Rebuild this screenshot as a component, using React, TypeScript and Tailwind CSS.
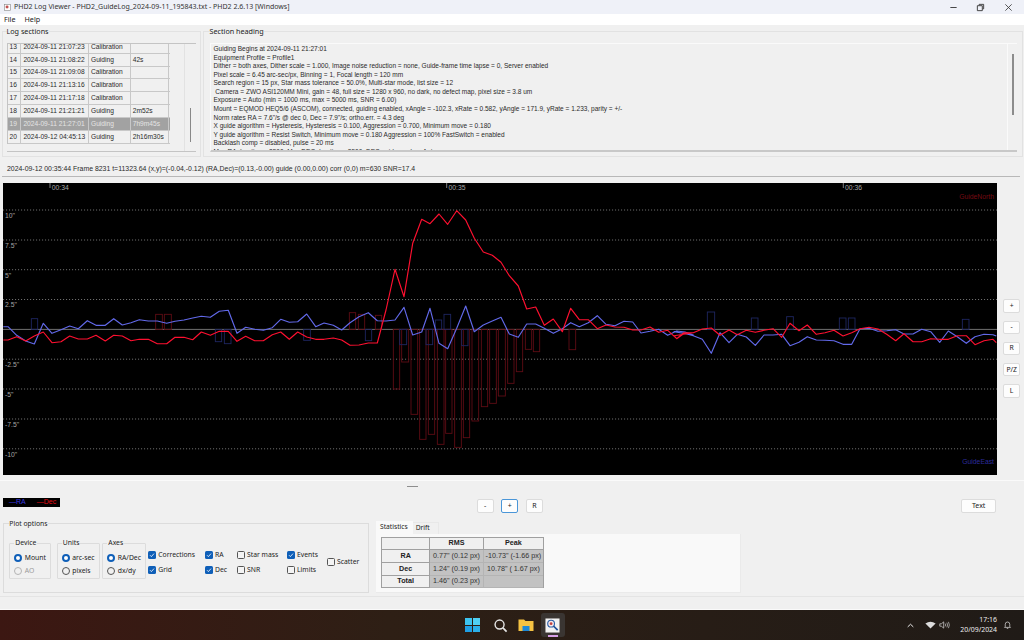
import React from "react";

const toPts = (a: number[], ox: number) => {
  const o: string[] = [];
  for (let i = 0; i < a.length; i += 2) o.push(`${(a[i] / 3 + ox).toFixed(1)},${(a[i + 1] / 3 + 180).toFixed(1)}`);
  return o;
};

const blue = [
  ...toPts([10,440,24,440,50,466,77,483,103,492,130,430,156,460,183,449,209,438,235,446,262,422,288,436,316,436,341,416,367,435,393,428,418,419,445,423,472,423,500,430,525,424,552,420,578,414,604,409,631,412,658,394,685,391,711,460,737,442,764,448,790,451,817,443,842,418,868,427,893,425,920,402,947,440,972,429,1000,436,1025,450], 0),
  ...toPts([0,428,27,410,55,398,82,422,108,423,135,420,162,382,188,465,215,456,240,385,267,490,293,506,320,445,347,378,373,455,400,435,427,423,453,412,478,462,505,472,530,432,557,432,583,445,610,460,637,446,662,428,688,440,715,428,742,407,768,433,795,437,822,424,848,426,873,459,900,454,926,448,953,466,980,453,1005,456,1030,465], 350),
  ...toPts([0,455,30,460,58,467,85,478,112,520,138,458,165,488,190,463,217,471,244,496,270,465,297,465,323,463,348,497,375,487,400,470,427,480,453,481,480,482,507,493,533,493,558,446,585,445,612,454,638,452,665,449,690,462,717,462,743,448,770,455,797,487,823,453,850,470,877,490,903,470,930,463,957,464,967,468], 674),
].join(" ");

const red = [
  ...toPts([10,480,24,480,50,470,77,483,103,468,130,456,156,488,183,485,209,468,235,477,262,477,288,466,316,483,341,466,367,468,393,482,418,478,445,478,472,491,500,491,525,472,552,472,578,479,604,456,631,466,658,454,685,454,711,484,737,469,764,482,790,482,817,464,842,456,868,478,893,456,920,471,947,478,972,478,1000,474,1025,480], 0),
  ...toPts([0,496,27,495,55,489,82,489,108,390,135,268,162,350,188,190,215,118,240,131,267,102,293,133,320,92,347,120,373,175,400,216,427,226,453,247,478,287,505,318,530,387,557,381,583,436,610,417,637,455,662,385,688,419,715,419,742,446,768,435,795,441,822,442,848,450,873,450,900,441,926,457,953,451,980,476,1005,458,1030,458], 350),
  ...toPts([0,467,8,476,30,458,58,458,85,447,112,444,138,466,165,450,190,464,217,451,244,457,270,451,297,446,323,472,348,430,375,452,400,435,427,463,453,458,480,451,507,468,533,458,558,446,585,442,612,447,638,463,665,482,690,461,717,485,743,485,770,476,797,478,823,478,850,467,877,467,903,494,930,482,957,478,967,488], 674),
].join(" ");

// x0, x1, y0, y1 in zoomed coordinates plus crop offset
const blueBars: number[][] = [
  [94,113,416,448,0],[646,665,448,485,0],[673,693,448,491,0],[911,931,448,481,0],
  [46,65,448,482,350],[149,170,448,494,350],[228,248,448,494,350],[256,275,420,448,350],[282,302,403,448,350],[335,354,448,497,350],
  [100,122,396,448,674],[232,252,414,448,674],[338,358,410,448,674],[496,516,414,448,674],[523,543,414,448,674],[865,885,418,448,674],
];
const redBars: number[][] = [
  [467,487,403,448,0],[493,514,403,448,0],
  [-2,17,398,448,350],[25,44,403,448,350],[76,95,406,448,350],[130,149,448,627,350],[155,176,448,546,350],[183,203,448,703,350],[209,228,448,778,350],[235,254,448,763,350],[262,282,448,793,350],[287,306,448,760,350],[314,334,448,802,350],[340,359,448,773,350],[366,386,448,723,350],[394,413,448,680,350],[419,439,448,670,350],[445,466,448,648,350],[473,492,448,610,350],[499,518,448,575,350],[526,545,448,508,350],[550,569,448,515,350],[657,677,448,509,350],
];

const Bars = ({ list, color }: { list: number[][]; color: string }) => (
  <>
    {list.map((b, i) => (
      <rect key={i} x={b[0] / 3 + b[4]} y={b[2] / 3 + 180} width={(b[1] - b[0]) / 3} height={(b[3] - b[2]) / 3} fill="none" stroke={color} strokeWidth="0.9" />
    ))}
  </>
);

function Chart() {
  const grid = [210, 240, 269.7, 299.5, 359.2, 389, 419, 448.8];
  const labels: [string, number][] = [["10\"", 215], ["7.5\"", 245], ["5\"", 275], ["2.5\"", 304.5], ["-2.5\"", 364.5], ["-5\"", 394], ["-7.5\"", 424], ["-10\"", 454]];
  const ticks: [string, number][] = [["00:34", 50], ["00:35", 446.7], ["00:36", 843.3]];
  return (
    <svg viewBox="3 183 994 292" className="block w-[994px] h-[292px] bg-black">
      {grid.map((y) => (
        <line key={y} x1="3" x2="997" y1={y} y2={y} stroke="#8a8a8a" strokeWidth="0.8" strokeDasharray="1.1 1.9" />
      ))}
      <line x1="3" x2="997" y1="329.4" y2="329.4" stroke="#7c7c7c" strokeWidth="0.9" />
      <Bars list={redBars} color="#5e0c14" />
      <Bars list={blueBars} color="#1e2660" />
      {labels.map(([t, y]) => (
        <text key={t} x="5" y={y + 2.6} fontSize="6.8" fill="#a4a4a4" fontFamily="Liberation Sans, sans-serif">{t}</text>
      ))}
      {ticks.map(([t, x]) => (
        <g key={t}>
          <line x1={x} x2={x} y1="183" y2="188" stroke="#a0a0a0" strokeWidth="0.8" />
          <text x={x + 1.8} y="190.4" fontSize="6.8" fill="#a8a8a8" fontFamily="Liberation Sans, sans-serif">{t}</text>
        </g>
      ))}
      <polyline points={blue} fill="none" stroke="#6269ea" strokeWidth="1.15" strokeLinejoin="round" />
      <polyline points={red} fill="none" stroke="#ff1030" strokeWidth="1.15" strokeLinejoin="round" />
      <text x="994" y="199" textAnchor="end" fontSize="6.8" fill="#760a12" fontFamily="Liberation Sans, sans-serif">GuideNorth</text>
      <text x="994" y="463.5" textAnchor="end" fontSize="6.8" fill="#2c2c9c" fontFamily="Liberation Sans, sans-serif">GuideEast</text>
    </svg>
  );
}

const rows = [
  ["13", "2024-09-11 21:07:23", "Calibration", ""],
  ["14", "2024-09-11 21:08:22", "Guiding", "42s"],
  ["15", "2024-09-11 21:09:08", "Calibration", ""],
  ["16", "2024-09-11 21:13:16", "Calibration", ""],
  ["17", "2024-09-11 21:17:18", "Calibration", ""],
  ["18", "2024-09-11 21:21:21", "Guiding", "2m52s"],
  ["19", "2024-09-11 21:27:01", "Guiding", "7h9m45s"],
  ["20", "2024-09-12 04:45:13", "Guiding", "2h16m30s"],
];

const heading = [
  "Guiding Begins at 2024-09-11 21:27:01",
  "Equipment Profile = Profile1",
  "Dither = both axes, Dither scale = 1.000, Image noise reduction = none, Guide-frame time lapse = 0, Server enabled",
  "Pixel scale = 6.45 arc-sec/px, Binning = 1, Focal length = 120 mm",
  "Search region = 15 px, Star mass tolerance = 50.0%, Multi-star mode, list size = 12",
  "\u00a0Camera = ZWO ASI120MM Mini, gain = 48, full size = 1280 x 960, no dark, no defect map, pixel size = 3.8 um",
  "Exposure = Auto (min = 1000 ms, max = 5000 ms, SNR = 6.00)",
  "Mount = EQMOD HEQ5/6 (ASCOM), connected, guiding enabled, xAngle = -102.3, xRate = 0.582, yAngle = 171.9, yRate = 1.233, parity = +/-",
  "Norm rates RA = 7.6\"/s @ dec 0, Dec = 7.9\"/s; ortho.err. = 4.3 deg",
  "X guide algorithm = Hysteresis, Hysteresis = 0.100, Aggression = 0.700, Minimum move = 0.180",
  "Y guide algorithm = Resist Switch, Minimum move = 0.180 Aggression = 100% FastSwitch = enabled",
  "Backlash comp = disabled, pulse = 20 ms",
  "Max RA duration = 2500, Max DEC duration = 2500, DEC guide mode = Auto",
];

const Radio = ({ label, on, dim }: { label: string; on?: boolean; dim?: boolean }) => (
  <div className={`flex items-center gap-[2.5px] h-[13.4px] ${dim ? "text-[#9a9a9a]" : "text-[#222]"}`}>
    <span className={`w-[8px] h-[8px] rounded-full shrink-0 ${on ? "border-[2.4px] border-[#0f5fb8] bg-white" : dim ? "border-[0.8px] border-[#b4b4b4]" : "border-[0.8px] border-[#555]"}`} />
    <span>{label}</span>
  </div>
);

const Check = ({ label, on }: { label: string; on?: boolean }) => (
  <div className="flex items-center gap-[2px] h-[8px] text-[#222]">
    <span className={`w-[8px] h-[8px] rounded-[1.5px] shrink-0 flex items-center justify-center ${on ? "bg-[#0f5fb8]" : "border-[0.8px] border-[#555] bg-[#f4f4f4]"}`}>
      {on && (
        <svg viewBox="0 0 8 8" className="w-[8px] h-[8px]"><path d="M2 4.2 3.4 5.6 6 2.6" fill="none" stroke="#fff" strokeWidth="0.8" /></svg>
      )}
    </span>
    <span>{label}</span>
  </div>
);

const Btn = ({ t, cls }: { t: string; cls: string }) => (
  <div className={`flex items-center justify-center bg-[#fdfdfd] rounded-[2px] border-[0.8px] text-[#222] ${cls}`}>{t}</div>
);

const SideBtn = ({ t }: { t: string }) => <Btn t={t} cls="w-[16.7px] h-[13.3px] border-[#dcdcdc]" />;

const SubGroup = ({ title, w, ml, children }: { title: string; w: string; ml: string; children: React.ReactNode }) => (
  <fieldset className={`border-[0.8px] border-[#dcdcdc] rounded-[1px] h-[40px] shrink-0 pl-[4px] pt-[4.2px] ${w} ${ml}`}>
    <legend className="leading-[8px] px-[1px] text-[#222]">{title}</legend>
    {children}
  </fieldset>
);

const stat = [
  ["RA", "0.77\" (0.12 px)", "-10.73\" (-1.66 px)"],
  ["Dec", "1.24\" (0.19 px)", "10.78\" ( 1.67 px)"],
  ["Total", "1.46\" (0.23 px)", ""],
];

const body = { fontFamily: '"Noto Sans", "Open Sans", sans-serif' };
const arial = { fontFamily: '"Liberation Sans", sans-serif' };

export default function App() {
  return (
    <div className="w-[1024px] h-[640px] flex flex-col overflow-hidden bg-[#f0f0f0] text-[#222] text-[6.8px]" style={body}>
      {/* Title bar */}
      <div className="h-[14px] shrink-0 flex items-center bg-[#eff1f8] pl-[4px]">
        <svg viewBox="0 0 8 8" className="w-[7px] h-[7px]"><rect x="0.5" y="0.5" width="7" height="7" fill="#fff" stroke="#888" strokeWidth="0.7" /><circle cx="3.5" cy="3.5" r="1.7" fill="#c05050" /></svg>
        <span className="ml-[3px] text-[7px] text-[#333]">PHD2 Log Viewer - PHD2_GuideLog_2024-09-11_195843.txt - PHD2 2.6.13 [Windows]</span>
        <div className="ml-auto flex items-center pr-[11px] text-[#333]">
          <svg viewBox="0 0 10 10" className="w-[9px] h-[9px]"><path d="M1.5 5h7" stroke="#333" strokeWidth="1" /></svg>
          <svg viewBox="0 0 10 10" className="w-[9px] h-[9px] ml-[18px]"><path d="M3.5 2.5V1.5h5v5H7.5M1.5 3h5.5v5.5H1.5Z" fill="none" stroke="#333" strokeWidth="1" /></svg>
          <svg viewBox="0 0 10 10" className="w-[9px] h-[9px] ml-[19px]"><path d="M1.5 1.5l7 7M8.5 1.5l-7 7" stroke="#333" strokeWidth="0.9" /></svg>
        </div>
      </div>
      {/* Menu */}
      <div className="h-[11px] shrink-0 bg-white flex items-center pl-[4px] gap-[9px] text-[7.2px]">
        <span>File</span>
        <span>Help</span>
      </div>
      {/* Sections */}
      <div className="h-[132px] shrink-0 flex pl-[2px] pr-[1px]">
        <fieldset className="w-[199px] h-[132px] border-[0.8px] border-[#e2e2e2] pl-[3.5px] pt-[5.5px] shrink-0">
          <legend className="leading-[12px] text-[7.2px]">Log sections</legend>
          <div className="border-t-[0.8px] border-b-[0.8px] border-[#c4c4c4] w-[189px] h-[109px] flex">
            <div className="w-[163px] h-[100px] overflow-hidden border-l-[0.8px] border-[#c4c4c4] flex flex-col justify-end shrink-0" style={arial}>
              {rows.map((r) => {
                const sel = r[0] === "19";
                return (
                  <div key={r[0]} className={`h-[12.83px] shrink-0 flex items-center border-b-[0.8px] border-[#c8c8c8] text-[6.65px] whitespace-nowrap ${sel ? "bg-[#a2a2a2] text-[#e4e4e4]" : "text-[#2a2a2a]"}`}>
                    <span className="w-[14px] pl-[2px] h-full flex items-center border-r-[1.2px] border-[#c8c8c8]">{r[0]}</span>
                    <span className="w-[68px] pl-[2px] h-full flex items-center border-r-[1.2px] border-[#c8c8c8]">{r[1]}</span>
                    <span className="w-[42px] pl-[2px] h-full flex items-center border-r-[1.2px] border-[#c8c8c8]">{r[2]}</span>
                    <span className="w-[39px] pl-[2px] h-full flex items-center border-r-[1.2px] border-[#c8c8c8]">{r[3]}</span>
                  </div>
                );
              })}
            </div>
            <div className="w-[15px] border-r-[0.8px] border-[#e2e2e2] shrink-0" />
            <div className="w-[1.4px] h-[34px] bg-[#888] ml-[5px] mt-[64.5px]" />
          </div>
        </fieldset>
        <fieldset className="flex-1 h-[132px] ml-[2px] border-[0.8px] border-[#e2e2e2] pl-[5.5px] pr-[5px] pt-[5.5px]">
          <legend className="leading-[12px] text-[7.2px]">Section heading</legend>
          <div className="h-[109.5px] flex border-t-[0.8px] border-l-[0.8px] border-[#fafafa] border-b-[2px] border-b-[#c8c8c8]">
            <div className="flex-1 overflow-hidden pl-[3px] pt-[1.7px] text-[6.52px] leading-[8.55px] text-[#2a2a2a]" style={arial}>
              {heading.map((h, i) => (
                <div key={i} className="h-[8.55px] whitespace-nowrap">{h}</div>
              ))}
            </div>
            <div className="w-[10px] border-l-[0.8px] border-[#fafafa] shrink-0">
              <div className="w-[1.4px] h-[61px] bg-[#8c8c8c] ml-[4.3px] mt-[10.5px]" />
            </div>
          </div>
        </fieldset>
      </div>
      {/* Status */}
      <div className="h-[13.5px] mt-[6px] mx-[2px] mr-[4px] shrink-0 flex items-center pl-[5px] border-b-[0.8px] border-[#b8b8b8] text-[6.92px] text-[#2a2a2a]" style={arial}>
        2024-09-12 00:35:44 Frame 8231 t=11323.64 (x,y)=(-0.04,-0.12) (RA,Dec)=(0.13,-0.00) guide (0.00,0.00) corr (0,0) m=630 SNR=17.4
      </div>
      {/* Graph with side buttons */}
      <div className="h-[292px] mt-[6.5px] shrink-0 flex pl-[3px]">
        <Chart />
        <div className="ml-[6.3px] pt-[116.3px] flex flex-col gap-[8px] text-[6.8px]">
          <SideBtn t="+" />
          <SideBtn t="-" />
          <SideBtn t="R" />
          <SideBtn t="P/Z" />
          <SideBtn t="L" />
        </div>
      </div>
      {/* Sash */}
      <div className="h-[6px] shrink-0 border-b-[0.8px] border-[#fafafa]" />
      <div className="h-[16.7px] shrink-0 flex items-start pl-[407px] pt-[5px]">
        <div className="w-[10.5px] h-[1px] bg-[#8e8e8e]" />
      </div>
      {/* Legend and zoom buttons */}
      <div className="h-[22px] shrink-0 flex items-start pl-[3px]">
        <div className="w-[57px] h-[9.6px] bg-black flex items-center text-[7px] font-normal" style={arial}>
          <span className="ml-[6px] text-[#3a3ae0]">—RA</span>
          <span className="ml-[11px] text-[#e00c14]">—Dec</span>
        </div>
        <div className="ml-[416.7px] mt-[1px] flex gap-[7.6px] text-[7px]">
          <Btn t="-" cls="w-[17px] h-[14.6px] border-[#dcdcdc]" />
          <Btn t="+" cls="w-[17px] h-[14.6px] border-[#4a96d8]" />
          <Btn t="R" cls="w-[17px] h-[14.6px] border-[#dcdcdc]" />
        </div>
        <div className="ml-[418.3px] mt-[1.3px]">
          <Btn t="Text" cls="w-[35px] h-[14.4px] border-[#dcdcdc] text-[7px]" />
        </div>
      </div>
      {/* Options and statistics */}
      <div className="h-[76px] shrink-0 flex items-start pl-[3px]">
        <fieldset className="w-[366px] h-[73px] shrink-0 border-[0.8px] border-[#dcdcdc] pl-[5.3px]">
          <legend className="leading-[8px]">Plot options</legend>
          <div className="flex items-start pt-[11.5px]">
            <SubGroup title="Device" w="w-[42px]" ml="ml-0">
              <Radio label="Mount" on />
              <Radio label="AO" dim />
            </SubGroup>
            <SubGroup title="Units" w="w-[43px]" ml="ml-[5.5px]">
              <Radio label="arc-sec" on />
              <Radio label="pixels" />
            </SubGroup>
            <SubGroup title="Axes" w="w-[43.5px]" ml="ml-[2.5px]">
              <Radio label="RA/Dec" on />
              <Radio label="dx/dy" />
            </SubGroup>
            <div className="flex flex-col gap-[7.3px] w-[56.7px] ml-[2.5px] pt-[11.5px] shrink-0">
              <Check label="Corrections" on />
              <Check label="Grid" on />
            </div>
            <div className="flex flex-col gap-[7.3px] w-[32px] pt-[11.5px] shrink-0">
              <Check label="RA" on />
              <Check label="Dec" on />
            </div>
            <div className="flex flex-col gap-[7.3px] w-[50px] pt-[11.5px] shrink-0">
              <Check label="Star mass" />
              <Check label="SNR" />
            </div>
            <div className="flex flex-col gap-[7.3px] w-[40px] pt-[11.5px] shrink-0">
              <Check label="Events" on />
              <Check label="Limits" />
            </div>
            <div className="pt-[19px]">
              <Check label="Scatter" />
            </div>
          </div>
        </fieldset>
        <div className="ml-[7px] w-[365px] mt-[1px] flex flex-col">
          <div className="flex items-end h-[13px] text-[6.7px]">
            <div className="w-[36.7px] h-[13px] bg-[#f9f9f9] flex items-center pl-[4px]">Statistics</div>
            <div className="w-[26.3px] h-[12px] border-t-[0.8px] border-r-[0.8px] border-[#e8e8e8] flex items-center pl-[3px]">Drift</div>
          </div>
          <div className="h-[59px] bg-[#f9f9f9] pl-[5px] pt-[3.5px] border-r-[0.8px] border-b-[0.8px] border-[#eaeaea]">
            <div className="w-[163px] h-[51px] bg-[#c2c2c2] border-[0.8px] border-[#a0a0a0] grid grid-cols-[48.3px_53.4px_1fr] grid-rows-[12px_12.8px_12.9px_1fr] text-[7.2px]" style={arial}>
              <div className="bg-[#f0f0f0] border-r-[0.8px] border-b-[0.8px] border-[#a0a0a0]" />
              <div className="bg-[#f0f0f0] border-r-[0.8px] border-b-[0.8px] border-[#a0a0a0] flex items-center justify-center font-bold text-[#222]">RMS</div>
              <div className="bg-[#f0f0f0] border-b-[0.8px] border-[#a0a0a0] flex items-center justify-center font-bold text-[#222]">Peak</div>
              {stat.map((s) => (
                <React.Fragment key={s[0]}>
                  <div className="bg-[#f0f0f0] border-r-[0.8px] border-b-[0.8px] border-[#a0a0a0] flex items-center justify-center font-bold text-[#222]">{s[0]}</div>
                  <div className="flex items-center justify-center text-[#333] border-r-[0.6px] border-b-[0.6px] border-[#b4b4b4]">{s[1]}</div>
                  <div className="flex items-center justify-center text-[#333] border-b-[0.6px] border-[#b4b4b4]">{s[2]}</div>
                </React.Fragment>
              ))}
            </div>
          </div>
        </div>
      </div>
      <div className="h-[1px] shrink-0 bg-[#e4e4e4]" />
      <div className="flex-1 border-b-[0.8px] border-[#fafafa]" />
      {/* Taskbar */}
      <div className="h-[30px] shrink-0 flex items-center bg-[linear-gradient(90deg,#3c1712,#2e1f15_38%,#201b17_100%)] text-white relative">
        <div className="ml-[465px] w-[14.5px] h-[14.5px] grid grid-cols-2 gap-[1px]">
          <span className="bg-[#3cc4f0]" />
          <span className="bg-[#4fd0f4]" />
          <span className="bg-[#1f9fe4]" />
          <span className="bg-[#2bb0ea]" />
        </div>
        <svg viewBox="0 0 16 16" className="ml-[13px] w-[15px] h-[15px]"><circle cx="7" cy="7" r="4.8" fill="none" stroke="#e6e6e6" strokeWidth="1.5" /><path d="M10.6 10.6 14.5 14.5" stroke="#e6e6e6" strokeWidth="1.8" /></svg>
        <svg viewBox="0 0 16 14" className="ml-[10.5px] w-[16px] h-[14px]"><path d="M0.5 1.5h5.5l1.5 1.5h8v10h-15Z" fill="#f5c242" /><rect x="4.5" y="8" width="7" height="5" fill="#1c88d8" /></svg>
        <div className="ml-[6.7px] w-[24.3px] h-[24px] rounded-[3px] bg-[#3a3532] flex items-center justify-center relative">
          <svg viewBox="0 0 16 16" className="w-[15px] h-[15px]">
            <rect x="0.5" y="0.5" width="15" height="15" fill="#f2f2f2" />
            <circle cx="6.5" cy="6" r="3.6" fill="#f6e8e8" stroke="#2a5ea8" strokeWidth="1.2" />
            <circle cx="6.5" cy="6" r="1.5" fill="#c04040" />
            <path d="M9.3 8.8 13.5 13" stroke="#1f4f98" strokeWidth="1.8" />
          </svg>
          <span className="absolute left-[7px] bottom-0 w-[10px] h-[1.6px] bg-[#d8a0e8]" />
        </div>
        <svg viewBox="0 0 10 6" className="ml-[342px] w-[7px] h-[5px]"><path d="M1 5 5 1.2 9 5" fill="none" stroke="#f0f0f0" strokeWidth="1.4" /></svg>
        <svg viewBox="0 0 14 10" className="ml-[11px] w-[11px] h-[8px]"><path d="M7 9.5 0.5 3Q7-1.5 13.5 3Z" fill="#dcdcdc" /></svg>
        <svg viewBox="0 0 14 10" className="ml-[3px] w-[11px] h-[8px]"><path d="M1 3.5h2l3-2.5v8L3 6.5H1Z" fill="none" stroke="#dcdcdc" strokeWidth="0.9" /><path d="M8 3.2q1 1.8 0 3.6M10 2q1.8 3 0 6M12 1q2.4 4 0 8" fill="none" stroke="#dcdcdc" strokeWidth="0.8" /></svg>
        <div className="ml-[6px] w-[41px] flex flex-col items-end text-[6.9px] leading-[10px] text-[#ececec]">
          <span>17:16</span>
          <span>20/09/2024</span>
        </div>
        <svg viewBox="0 0 12 12" className="ml-[6px] w-[9px] h-[10px]"><path d="M3 8V5a3 3 0 0 1 6 0v3l1 1.2H2ZM5 10.5h2" fill="none" stroke="#e8e8e8" strokeWidth="0.9" /></svg>
      </div>
    </div>
  );
}
